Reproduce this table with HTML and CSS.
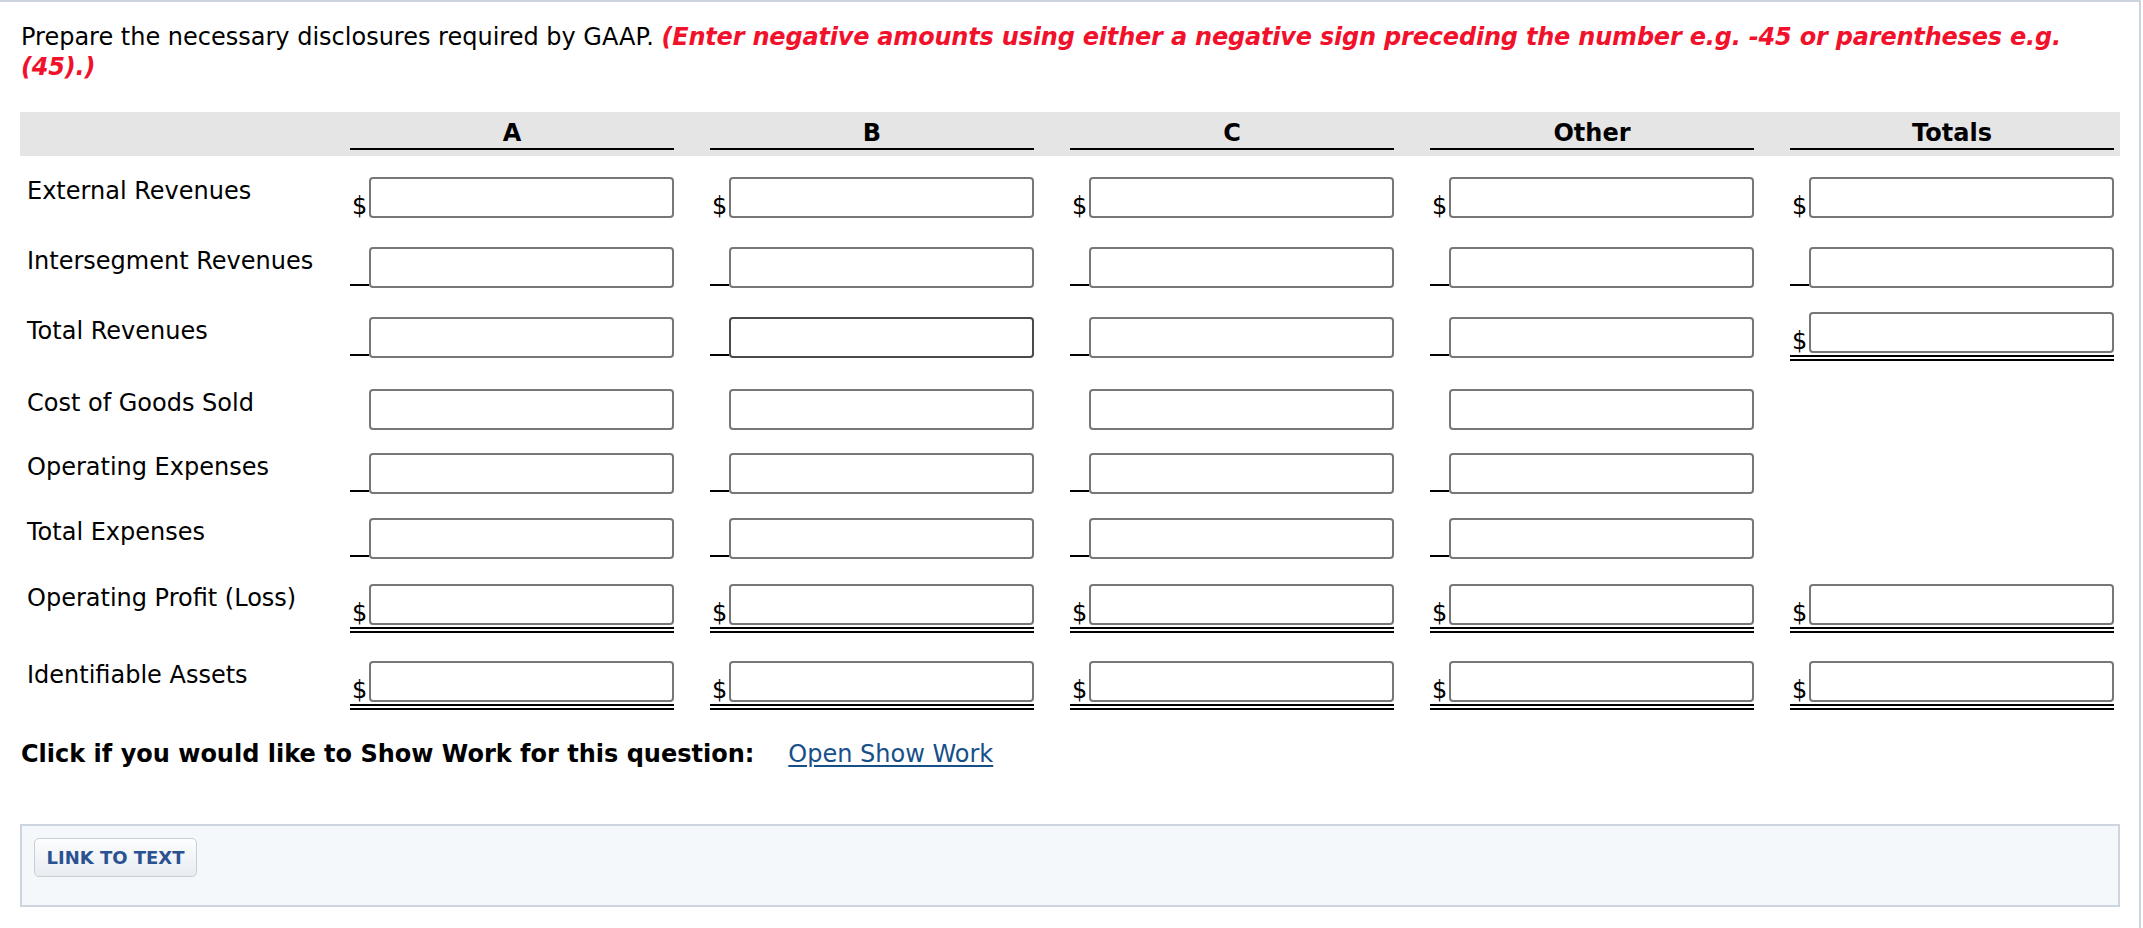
FILE: index.html
```html
<!DOCTYPE html>
<html lang="en">
<head>
<meta charset="utf-8">
<title>Segment disclosures</title>
<link rel="stylesheet" href="styles.css">
</head>
<body>
<div class="page">
  <div class="content">
    <p class="prompt"><span class="lead">Prepare the necessary disclosures required by GAAP.</span> <strong class="note">(Enter negative amounts using either a negative sign preceding the number e.g. -45 or parentheses e.g.</strong> <strong class="note">(45).)</strong></p>

    <div class="head">
      <div class="hcell blank"></div>
      <div class="hcell">A</div>
      <div class="hcell">B</div>
      <div class="hcell">C</div>
      <div class="hcell">Other</div>
      <div class="hcell">Totals</div>
    </div>

    <div class="sheet">
      <!-- Row 1 -->
      <div class="label">External Revenues</div>
      <div class="cell"><span class="sign">$</span><input class="amt" type="text"></div>
      <div class="cell"><span class="sign">$</span><input class="amt" type="text"></div>
      <div class="cell"><span class="sign">$</span><input class="amt" type="text"></div>
      <div class="cell"><span class="sign">$</span><input class="amt" type="text"></div>
      <div class="cell"><span class="sign">$</span><input class="amt" type="text"></div>

      <!-- Row 2 -->
      <div class="label">Intersegment Revenues</div>
      <div class="cell ul"><span class="sign"></span><input class="amt" type="text"></div>
      <div class="cell ul"><span class="sign"></span><input class="amt" type="text"></div>
      <div class="cell ul"><span class="sign"></span><input class="amt" type="text"></div>
      <div class="cell ul"><span class="sign"></span><input class="amt" type="text"></div>
      <div class="cell ul"><span class="sign"></span><input class="amt" type="text"></div>

      <!-- Row 3 -->
      <div class="label">Total Revenues</div>
      <div class="cell ul"><span class="sign"></span><input class="amt" type="text"></div>
      <div class="cell ul"><span class="sign"></span><input class="amt focus" type="text"></div>
      <div class="cell ul"><span class="sign"></span><input class="amt" type="text"></div>
      <div class="cell ul"><span class="sign"></span><input class="amt" type="text"></div>
      <div class="cell dbl raise"><span class="sign">$</span><input class="amt" type="text"></div>

      <!-- Row 4 -->
      <div class="label">Cost of Goods Sold</div>
      <div class="cell"><span class="sign"></span><input class="amt" type="text"></div>
      <div class="cell"><span class="sign"></span><input class="amt" type="text"></div>
      <div class="cell"><span class="sign"></span><input class="amt" type="text"></div>
      <div class="cell"><span class="sign"></span><input class="amt" type="text"></div>
      <div class="cell empty"></div>

      <!-- Row 5 -->
      <div class="label">Operating Expenses</div>
      <div class="cell ul"><span class="sign"></span><input class="amt" type="text"></div>
      <div class="cell ul"><span class="sign"></span><input class="amt" type="text"></div>
      <div class="cell ul"><span class="sign"></span><input class="amt" type="text"></div>
      <div class="cell ul"><span class="sign"></span><input class="amt" type="text"></div>
      <div class="cell empty"></div>

      <!-- Row 6 -->
      <div class="label">Total Expenses</div>
      <div class="cell ul"><span class="sign"></span><input class="amt" type="text"></div>
      <div class="cell ul"><span class="sign"></span><input class="amt" type="text"></div>
      <div class="cell ul"><span class="sign"></span><input class="amt" type="text"></div>
      <div class="cell ul"><span class="sign"></span><input class="amt" type="text"></div>
      <div class="cell empty"></div>

      <!-- Row 7 -->
      <div class="label">Operating Profit (Loss)</div>
      <div class="cell dbl"><span class="sign">$</span><input class="amt" type="text"></div>
      <div class="cell dbl"><span class="sign">$</span><input class="amt" type="text"></div>
      <div class="cell dbl"><span class="sign">$</span><input class="amt" type="text"></div>
      <div class="cell dbl"><span class="sign">$</span><input class="amt" type="text"></div>
      <div class="cell dbl"><span class="sign">$</span><input class="amt" type="text"></div>

      <!-- Row 8 -->
      <div class="label">Identifiable Assets</div>
      <div class="cell dbl"><span class="sign">$</span><input class="amt" type="text"></div>
      <div class="cell dbl"><span class="sign">$</span><input class="amt" type="text"></div>
      <div class="cell dbl"><span class="sign">$</span><input class="amt" type="text"></div>
      <div class="cell dbl"><span class="sign">$</span><input class="amt" type="text"></div>
      <div class="cell dbl"><span class="sign">$</span><input class="amt" type="text"></div>
    </div>

    <p class="showwork"><span class="sw-label">Click if you would like to Show Work for this question:</span><a class="sw-link" href="#">Open Show Work</a></p>

    <div class="panel">
      <button class="linkbtn" type="button">LINK TO TEXT</button>
    </div>
  </div>
</div>
</body>
</html>
```

FILE: styles.css
```css
html, body {
  margin: 0;
  padding: 0;
  background: #ffffff;
}

body {
  font-family: "DejaVu Sans", Verdana, sans-serif;
  font-size: 24px;
  color: #000000;
}

.page {
  width: 2139px;
  min-height: 926px;
  border-top: 2px solid #ccd4df;
  border-right: 2px solid #ccd4df;
}

.content {
  padding-left: 20px;
  width: 2100px;
}

.prompt {
  margin: 20px 0 0 0;
  padding-left: 1px;
  width: 2100px;
  line-height: 30px;
}

.note {
  color: #f2112b;
  font-style: italic;
  font-weight: bold;
  letter-spacing: -0.2px;
}

.head {
  display: grid;
  grid-template-columns: 294px repeat(5, 324px);
  column-gap: 36px;
  margin-top: 30px;
  background: #e5e5e5;
  padding: 7px 6px 6px 0;
}

.hcell {
  font-weight: bold;
  line-height: 29px;
  text-align: center;
  border-bottom: 2px solid #000000;
}

.hcell.blank {
  border-bottom: 2px solid transparent;
}

.sheet {
  display: grid;
  grid-template-columns: 294px repeat(5, 324px);
  grid-template-rows: 70px 70px 72px 64px 65px 66px 77px 72px;
  column-gap: 36px;
}

.label {
  align-self: start;
  padding: 21px 0 0 7px;
  line-height: 29px;
  white-space: nowrap;
}

.cell {
  display: flex;
  align-items: flex-start;
  align-self: start;
  margin-top: 21px;
}

.cell.raise {
  margin-top: 16px;
}

.sign {
  flex: none;
  width: 19px;
  height: 39px;
  box-sizing: border-box;
  padding: 15px 0 0 2px;
  line-height: 29px;
}

.cell.ul .sign {
  border-bottom: 2px solid #000000;
}

.cell.dbl {
  padding-bottom: 2px;
  border-bottom: 6px double #000000;
}

.amt {
  flex: none;
  width: 305px;
  height: 41px;
  box-sizing: border-box;
  margin: 0;
  padding: 0 6px;
  border: 2px solid #777777;
  border-radius: 4px;
  background: #ffffff;
  font: inherit;
  outline: none;
}

.amt.focus {
  border-color: #4a4a4a;
}

.showwork {
  margin: 28px 0 0 0;
  padding-left: 1px;
  line-height: 29px;
  display: flex;
  align-items: baseline;
}

.sw-label {
  font-weight: bold;
}

.sw-link {
  margin-left: 34px;
  color: #175089;
  text-decoration: underline;
  text-decoration-thickness: 2px;
  text-underline-offset: 3px;
}

.panel {
  margin-top: 55px;
  width: 2100px;
  height: 83px;
  box-sizing: border-box;
  border: 2px solid #cdd5e0;
  background: #f5f8fb;
  padding: 12px;
}

.linkbtn {
  display: block;
  width: 163px;
  height: 39px;
  margin: 0;
  padding: 0;
  border: 1px solid #c9ced6;
  border-radius: 5px;
  background: linear-gradient(#fdfdfe, #e8ecf1);
  font-family: "DejaVu Sans", Verdana, sans-serif;
  font-size: 18px;
  font-weight: bold;
  color: #2b5290;
  text-align: center;
}
```
